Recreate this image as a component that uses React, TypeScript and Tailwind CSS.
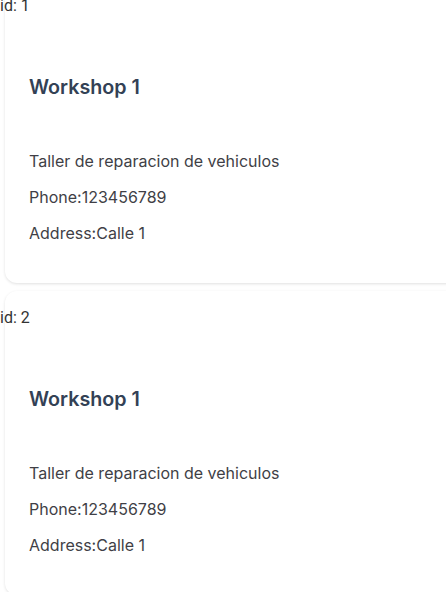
const WORKSHOPS = [
  { id: 1, name: "Workshop 1", desc: "Taller de reparacion de vehiculos", phone: "123456789", address: "Calle 1" },
  { id: 2, name: "Workshop 1", desc: "Taller de reparacion de vehiculos", phone: "123456789", address: "Calle 1" },
];

const WorkshopCard = ({ w }: { w: (typeof WORKSHOPS)[number] }) => (
  <div className="ml-[5px] w-[460px] bg-white rounded-xl shadow-[0_1px_3px_rgba(0,0,0,0.12)] pt-[17px] pb-[38px]">
    <p className="-ml-[5px] text-[16px] leading-[20px] text-[#333] font-['Roboto',sans-serif]">id: {w.id}</p>
    <div className="pl-[24px]">
      <h2 className="mt-[57px] text-[19.7px] leading-[28px] font-semibold text-[#334155] font-['Inter',sans-serif]">{w.name}</h2>
      <div className="mt-[48px] flex flex-col gap-[12px] text-[16px] leading-[24px] text-[#3f3f46] font-['Inter',sans-serif]">
        <p>{w.desc}</p>
        <p>Phone:{w.phone}</p>
        <p>Address:{w.address}</p>
      </div>
    </div>
  </div>
);

export default function App() {
  return (
    <div className="h-[592px] overflow-hidden bg-white">
      <div className="-mt-[21px] flex flex-col gap-[8px]">
        {WORKSHOPS.map((w) => (
          <WorkshopCard key={w.id} w={w} />
        ))}
      </div>
    </div>
  );
}
